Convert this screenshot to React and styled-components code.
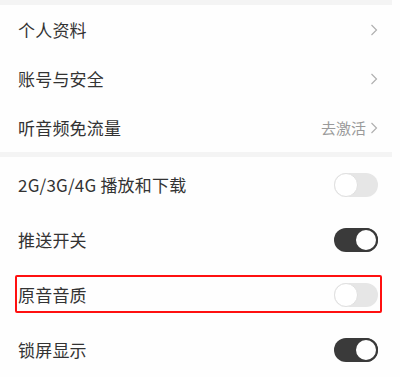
import React from "react";
import styled, { createGlobalStyle } from "styled-components";

const GlobalStyle = createGlobalStyle`
  body {
    margin: 0;
    background: #fefefe;
    font-family: "Noto Sans CJK SC", "Noto Sans", sans-serif;
  }
`;

const Page = styled.div`
  width: 400px;
  height: 377px;
  overflow: hidden;
  background: #fefefe;
`;

const Band = styled.div`
  width: 392px;
  height: ${(p) => p.h}px;
  background: #f4f4f4;
`;

const Group = styled.section`
  display: flex;
  flex-direction: column;
`;

const Row = styled.div`
  position: relative;
  display: flex;
  align-items: center;
  justify-content: space-between;
  height: ${(p) => p.h}px;
  padding: 0 22px 0 18px;
  box-sizing: border-box;

  ${(p) =>
    p.highlight &&
    `
    &::after {
      content: "";
      position: absolute;
      left: 15px;
      right: 18px;
      top: 8px;
      bottom: 9px;
      border: 2px solid #ff1010;
      border-radius: 2px;
      pointer-events: none;
    }
  `}
`;

const Label = styled.span`
  font-size: 17px;
  color: #333;
  letter-spacing: 0.2px;
`;

const Right = styled.div`
  display: flex;
  align-items: center;
  gap: 4px;
`;

const Hint = styled.span`
  font-size: 15px;
  color: #9a9a9a;
`;

const Track = styled.div`
  position: relative;
  width: 44px;
  height: 24px;
  border-radius: 12px;
  background: ${(p) => (p.on ? "#3a3a3a" : "#e6e6e6")};
`;

const Knob = styled.div`
  position: absolute;
  top: 0;
  left: ${(p) => (p.on ? "20px" : "0")};
  width: 24px;
  height: 24px;
  box-sizing: border-box;
  border-radius: 50%;
  background: #fff;
  border: ${(p) => (p.on ? "2px solid #3a3a3a" : "1px solid #e0e0e0")};
`;

const Chevron = () => (
  <svg width="8" height="12" viewBox="0 0 8 12">
    <polyline points="1.5,1 6.5,6 1.5,11" fill="none" stroke="#b0b0b0" strokeWidth="1.2" />
  </svg>
);

const Toggle = ({ on }) => (
  <Track on={on}>
    <Knob on={on} />
  </Track>
);

const App = () => {
  return (
    <Page>
      <GlobalStyle />
      <Band h={5} />
      <Group>
        <Row h={49}>
          <Label>个人资料</Label>
          <Right>
            <Chevron />
          </Right>
        </Row>
        <Row h={49}>
          <Label>账号与安全</Label>
          <Right>
            <Chevron />
          </Right>
        </Row>
        <Row h={49}>
          <Label>听音频免流量</Label>
          <Right>
            <Hint>去激活</Hint>
            <Chevron />
          </Right>
        </Row>
      </Group>
      <Band h={5} />
      <Group>
        <Row h={55}>
          <Label>2G/3G/4G 播放和下载</Label>
          <Toggle on={false} />
        </Row>
        <Row h={55}>
          <Label>推送开关</Label>
          <Toggle on />
        </Row>
        <Row h={55} highlight>
          <Label>原音音质</Label>
          <Toggle on={false} />
        </Row>
        <Row h={55}>
          <Label>锁屏显示</Label>
          <Toggle on />
        </Row>
      </Group>
    </Page>
  );
};

export default App;
